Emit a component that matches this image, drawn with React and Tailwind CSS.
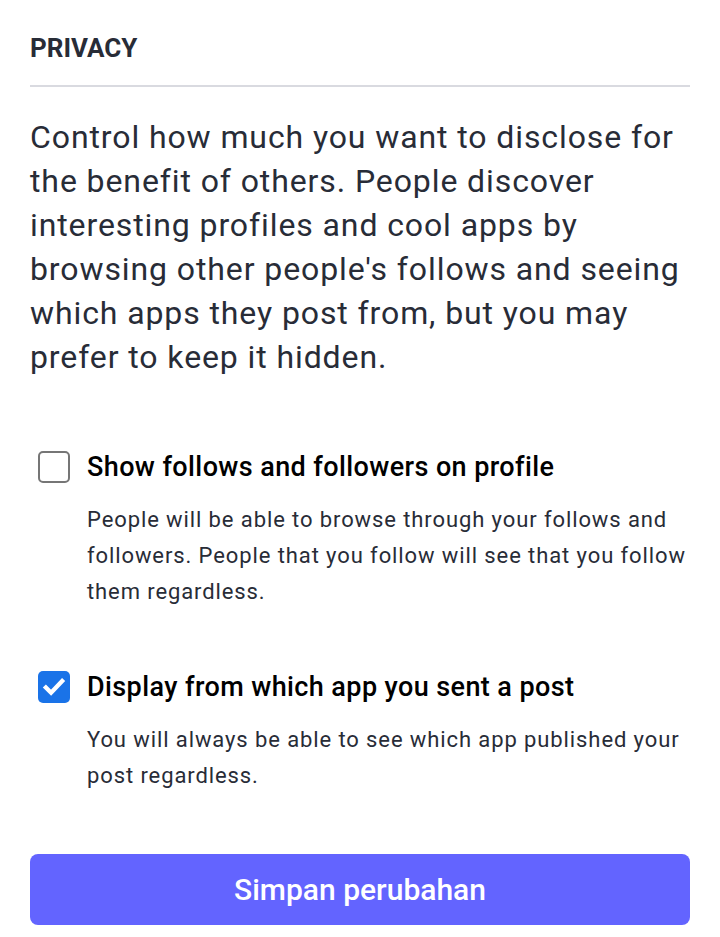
import { useState } from 'react';

function CheckRow({ checked, onChange, label, hint }) {
  return (
    <div className="flex flex-col">
      <label className="flex items-center gap-[17px] cursor-pointer">
        <span className="flex w-[40px] justify-end">
          {checked ? (
            <span className="flex h-[32px] w-[32px] items-center justify-center rounded-[5px] bg-[#1a73e8]">
              <svg width="26" height="26" viewBox="0 0 24 24" fill="none">
                <path d="M4.5 12.5l4.8 4.8L19.5 6.5" stroke="white" strokeWidth="4" strokeLinecap="square" strokeLinejoin="miter" />
              </svg>
            </span>
          ) : (
            <span className="h-[32px] w-[32px] rounded-[5px] border-[2px] border-[#767676] bg-white" />
          )}
        </span>
        <input type="checkbox" className="hidden" checked={checked} onChange={onChange} />
        <span className="text-[27px] leading-[36px] font-medium tracking-[0.4px] text-[#000]">{label}</span>
      </label>
      <p className="mt-[17px] pl-[57px] text-[22px] leading-[36px] tracking-[0.9px] text-[#282c37]">{hint}</p>
    </div>
  );
}

export default function App() {
  const [showFollows, setShowFollows] = useState(false);
  const [showApp, setShowApp] = useState(true);

  return (
    <div className="min-h-[937px] bg-white px-[30px] pt-[30px] font-['Roboto',sans-serif] text-[#282c37]">
      {/* Section header */}
      <h3 className="border-b-[2px] border-[#d9dae0] pb-[19px] text-[26px] leading-[36px] font-bold uppercase text-[#282c37]">
        Privacy
      </h3>

      <p className="mt-[28px] text-[32px] leading-[44px] tracking-[0.9px] text-[#282c37]">
        Control how much you want to disclose for the benefit of others. People discover interesting profiles and cool apps by browsing other people's follows and seeing which apps they post from, but you may prefer to keep it hidden.
      </p>

      <div className="mt-[70px] flex flex-col gap-[59px]">
        <CheckRow
          checked={showFollows}
          onChange={() => setShowFollows(!showFollows)}
          label="Show follows and followers on profile"
          hint="People will be able to browse through your follows and followers. People that you follow will see that you follow them regardless."
        />
        <CheckRow
          checked={showApp}
          onChange={() => setShowApp(!showApp)}
          label="Display from which app you sent a post"
          hint="You will always be able to see which app published your post regardless."
        />
      </div>

      <button className="mt-[60px] flex h-[71px] w-full items-center justify-center rounded-[8px] bg-[#6364ff] text-[30px] font-medium text-white">
        Simpan perubahan
      </button>
    </div>
  );
}
